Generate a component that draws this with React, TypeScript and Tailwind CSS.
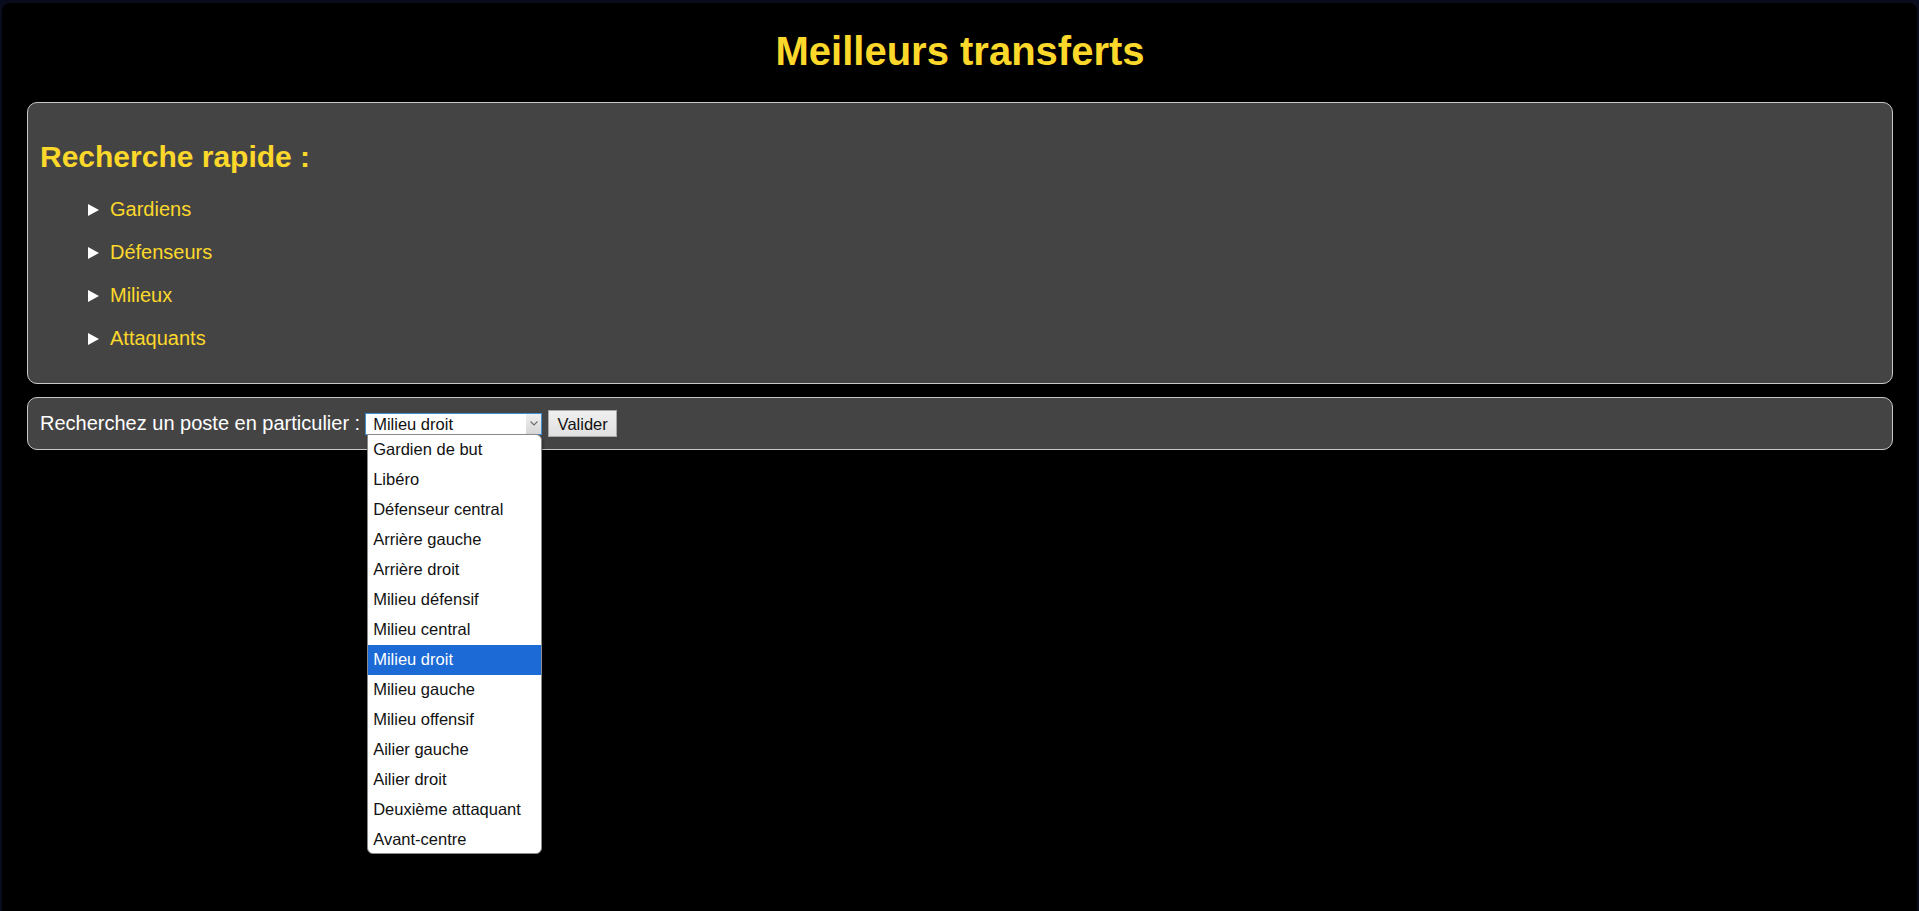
import React from "react";

const options = [
  "Gardien de but",
  "Libéro",
  "Défenseur central",
  "Arrière gauche",
  "Arrière droit",
  "Milieu défensif",
  "Milieu central",
  "Milieu droit",
  "Milieu gauche",
  "Milieu offensif",
  "Ailier gauche",
  "Ailier droit",
  "Deuxième attaquant",
  "Avant-centre",
];

const groups = ["Gardiens", "Défenseurs", "Milieux", "Attaquants"];

function Marker() {
  return (
    <svg width="11" height="12" viewBox="0 0 11 12" className="shrink-0">
      <polygon points="0,0 11,6 0,12" fill="#ffffff" />
    </svg>
  );
}

export default function App() {
  return (
    <div
      className="w-full h-[911px] bg-[#080c1c] pt-[3px] px-[2px] overflow-hidden"
      style={{ fontFamily: '"Liberation Sans", Arial, sans-serif' }}
    >
      <div className="h-full bg-black rounded-tl-[8px] rounded-tr-[8px] pl-[25px] pr-[24px]">
        <h1 className="pt-[25px] text-center text-[40px] leading-[46px] font-bold text-[#fcd82b]">
          Meilleurs transferts
        </h1>

        <div className="mt-[28px] border border-[#c8c8c8] rounded-[10px] bg-[#454445] px-[12px] pb-[23px]">
          <h2 className="mt-[36px] text-[30px] leading-[35px] font-bold text-[#fcd82b]">
            Recherche rapide :
          </h2>
          <div className="mt-[14px] ml-[48px] flex flex-col">
            {groups.map((g) => (
              <div key={g} className="h-[43px] flex items-center gap-[11px]">
                <Marker />
                <span className="text-[20px] leading-[23px] text-[#fcd82b]">{g}</span>
              </div>
            ))}
          </div>
        </div>

        <div className="mt-[13px] h-[53px] border border-[#c8c8c8] rounded-[10px] bg-[#454445] px-[12px] flex items-center">
          <span className="text-[20px] leading-[23px] text-white">
            Recherchez un poste en particulier :
          </span>
          <div className="relative ml-[5px]">
            <div className="w-[177px] h-[22px] border border-[#3d8fd8] bg-white flex items-center">
              <span className="flex-1 pl-[7px] text-[16.5px] leading-[20px] text-[#111]">Milieu droit</span>
              <div className="w-[15px] h-full bg-gradient-to-b from-[#f0f0f0] to-[#d6d6d6] flex items-center justify-center">
                <svg width="8" height="5" viewBox="0 0 8 5">
                  <polyline points="0.5,0.5 4,4 7.5,0.5" fill="none" stroke="#6d6d6d" strokeWidth="1.1" />
                </svg>
              </div>
            </div>
            <div className="absolute left-[2px] top-[21px] w-[175px] h-[420px] bg-white border border-[#8a8a8a] rounded-[6px] rounded-tl-none overflow-hidden shadow-[1px_2px_3px_rgba(0,0,0,0.35)] z-10">
              {options.map((o) => {
                const sel = o === "Milieu droit";
                return (
                  <div
                    key={o}
                    className={
                      sel
                        ? "h-[30px] flex items-center pl-[5px] text-[16.5px] bg-[#1b6ad6] text-white"
                        : "h-[30px] flex items-center pl-[5px] text-[16.5px] text-[#111]"
                    }
                  >
                    {o}
                  </div>
                );
              })}
            </div>
          </div>
          <button className="ml-[6px] w-[69px] h-[27px] border border-[#a8a8a8] bg-gradient-to-b from-[#f0f0f0] to-[#e0e0e0] text-[16.5px] leading-[20px] text-[#111] flex items-center justify-center">
            Valider
          </button>
        </div>
      </div>
    </div>
  );
}
